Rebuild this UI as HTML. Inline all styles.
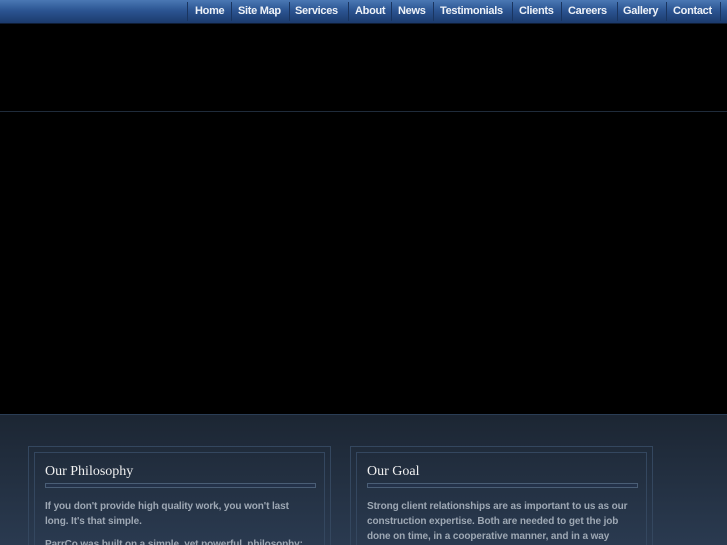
<!DOCTYPE html>
<html><head><style>
*{margin:0;padding:0;box-sizing:border-box}
html,body{width:727px;height:545px;overflow:hidden}
body{position:relative;background:#000;font-family:"Liberation Sans",sans-serif}
#nav{position:absolute;left:0;top:0;width:727px;height:24px;background:linear-gradient(#4a78b4,#2c5592 45%,#1b3a6c);border-bottom:1px solid #0e1c33}
#nav span{position:absolute;top:5px;font-size:11px;font-weight:bold;color:#eef2f8;letter-spacing:-0.3px}
.sep{position:absolute;top:2px;width:1px;height:19px;background:#5b82b8;border-left:1px solid #1a3560}
#line{position:absolute;top:111px;left:0;width:727px;height:1px;background:#1f2b3a}
#bot{position:absolute;top:414px;left:0;width:727px;height:131px;background:linear-gradient(#1c2633,#2a3a50);border-top:1px solid #2a3d55}
.box{position:absolute;top:446px;width:303px;height:99px;border:1px solid #34475f;border-bottom:none}
.in{position:absolute;left:5px;top:5px;right:5px;bottom:0;border:1px solid #34475f;border-bottom:none}
.box h2{position:absolute;left:10px;top:11px;font:14px "Liberation Serif",serif;color:#f0f0f0}
.bar{position:absolute;left:10px;right:8px;top:30px;height:5px;border:1px solid #4a5e76;background:#24324a}
.box p{position:absolute;left:10px;width:262px;font-size:10px;font-weight:bold;color:#9ea8b4;line-height:15px;letter-spacing:-0.1px}
</style></head><body>
<div id="nav">
<div class="sep" style="left:187px"></div><span style="left:195px">Home</span>
<div class="sep" style="left:231px"></div><span style="left:238px">Site Map</span>
<div class="sep" style="left:289px"></div><span style="left:295px">Services</span>
<div class="sep" style="left:348px"></div><span style="left:355px">About</span>
<div class="sep" style="left:391px"></div><span style="left:398px">News</span>
<div class="sep" style="left:433px"></div><span style="left:440px">Testimonials</span>
<div class="sep" style="left:512px"></div><span style="left:519px">Clients</span>
<div class="sep" style="left:561px"></div><span style="left:568px">Careers</span>
<div class="sep" style="left:617px"></div><span style="left:623px">Gallery</span>
<div class="sep" style="left:666px"></div><span style="left:673px">Contact</span>
<div class="sep" style="left:720px"></div>
</div>
<div id="line"></div>
<div id="bot"></div>
<div class="box" style="left:28px"><div class="in">
<h2>Our Philosophy</h2><div class="bar"></div>
<p style="top:46px">If you don't provide high quality work, you won't last long. It's that simple.</p>
<p style="top:84px">ParrCo was built on a simple, yet powerful, philosophy:</p>
</div></div>
<div class="box" style="left:350px"><div class="in">
<h2>Our Goal</h2><div class="bar"></div>
<p style="top:46px">Strong client relationships are as important to us as our construction expertise. Both are needed to get the job done on time, in a cooperative manner, and in a way</p>
</div></div>
</body></html>
